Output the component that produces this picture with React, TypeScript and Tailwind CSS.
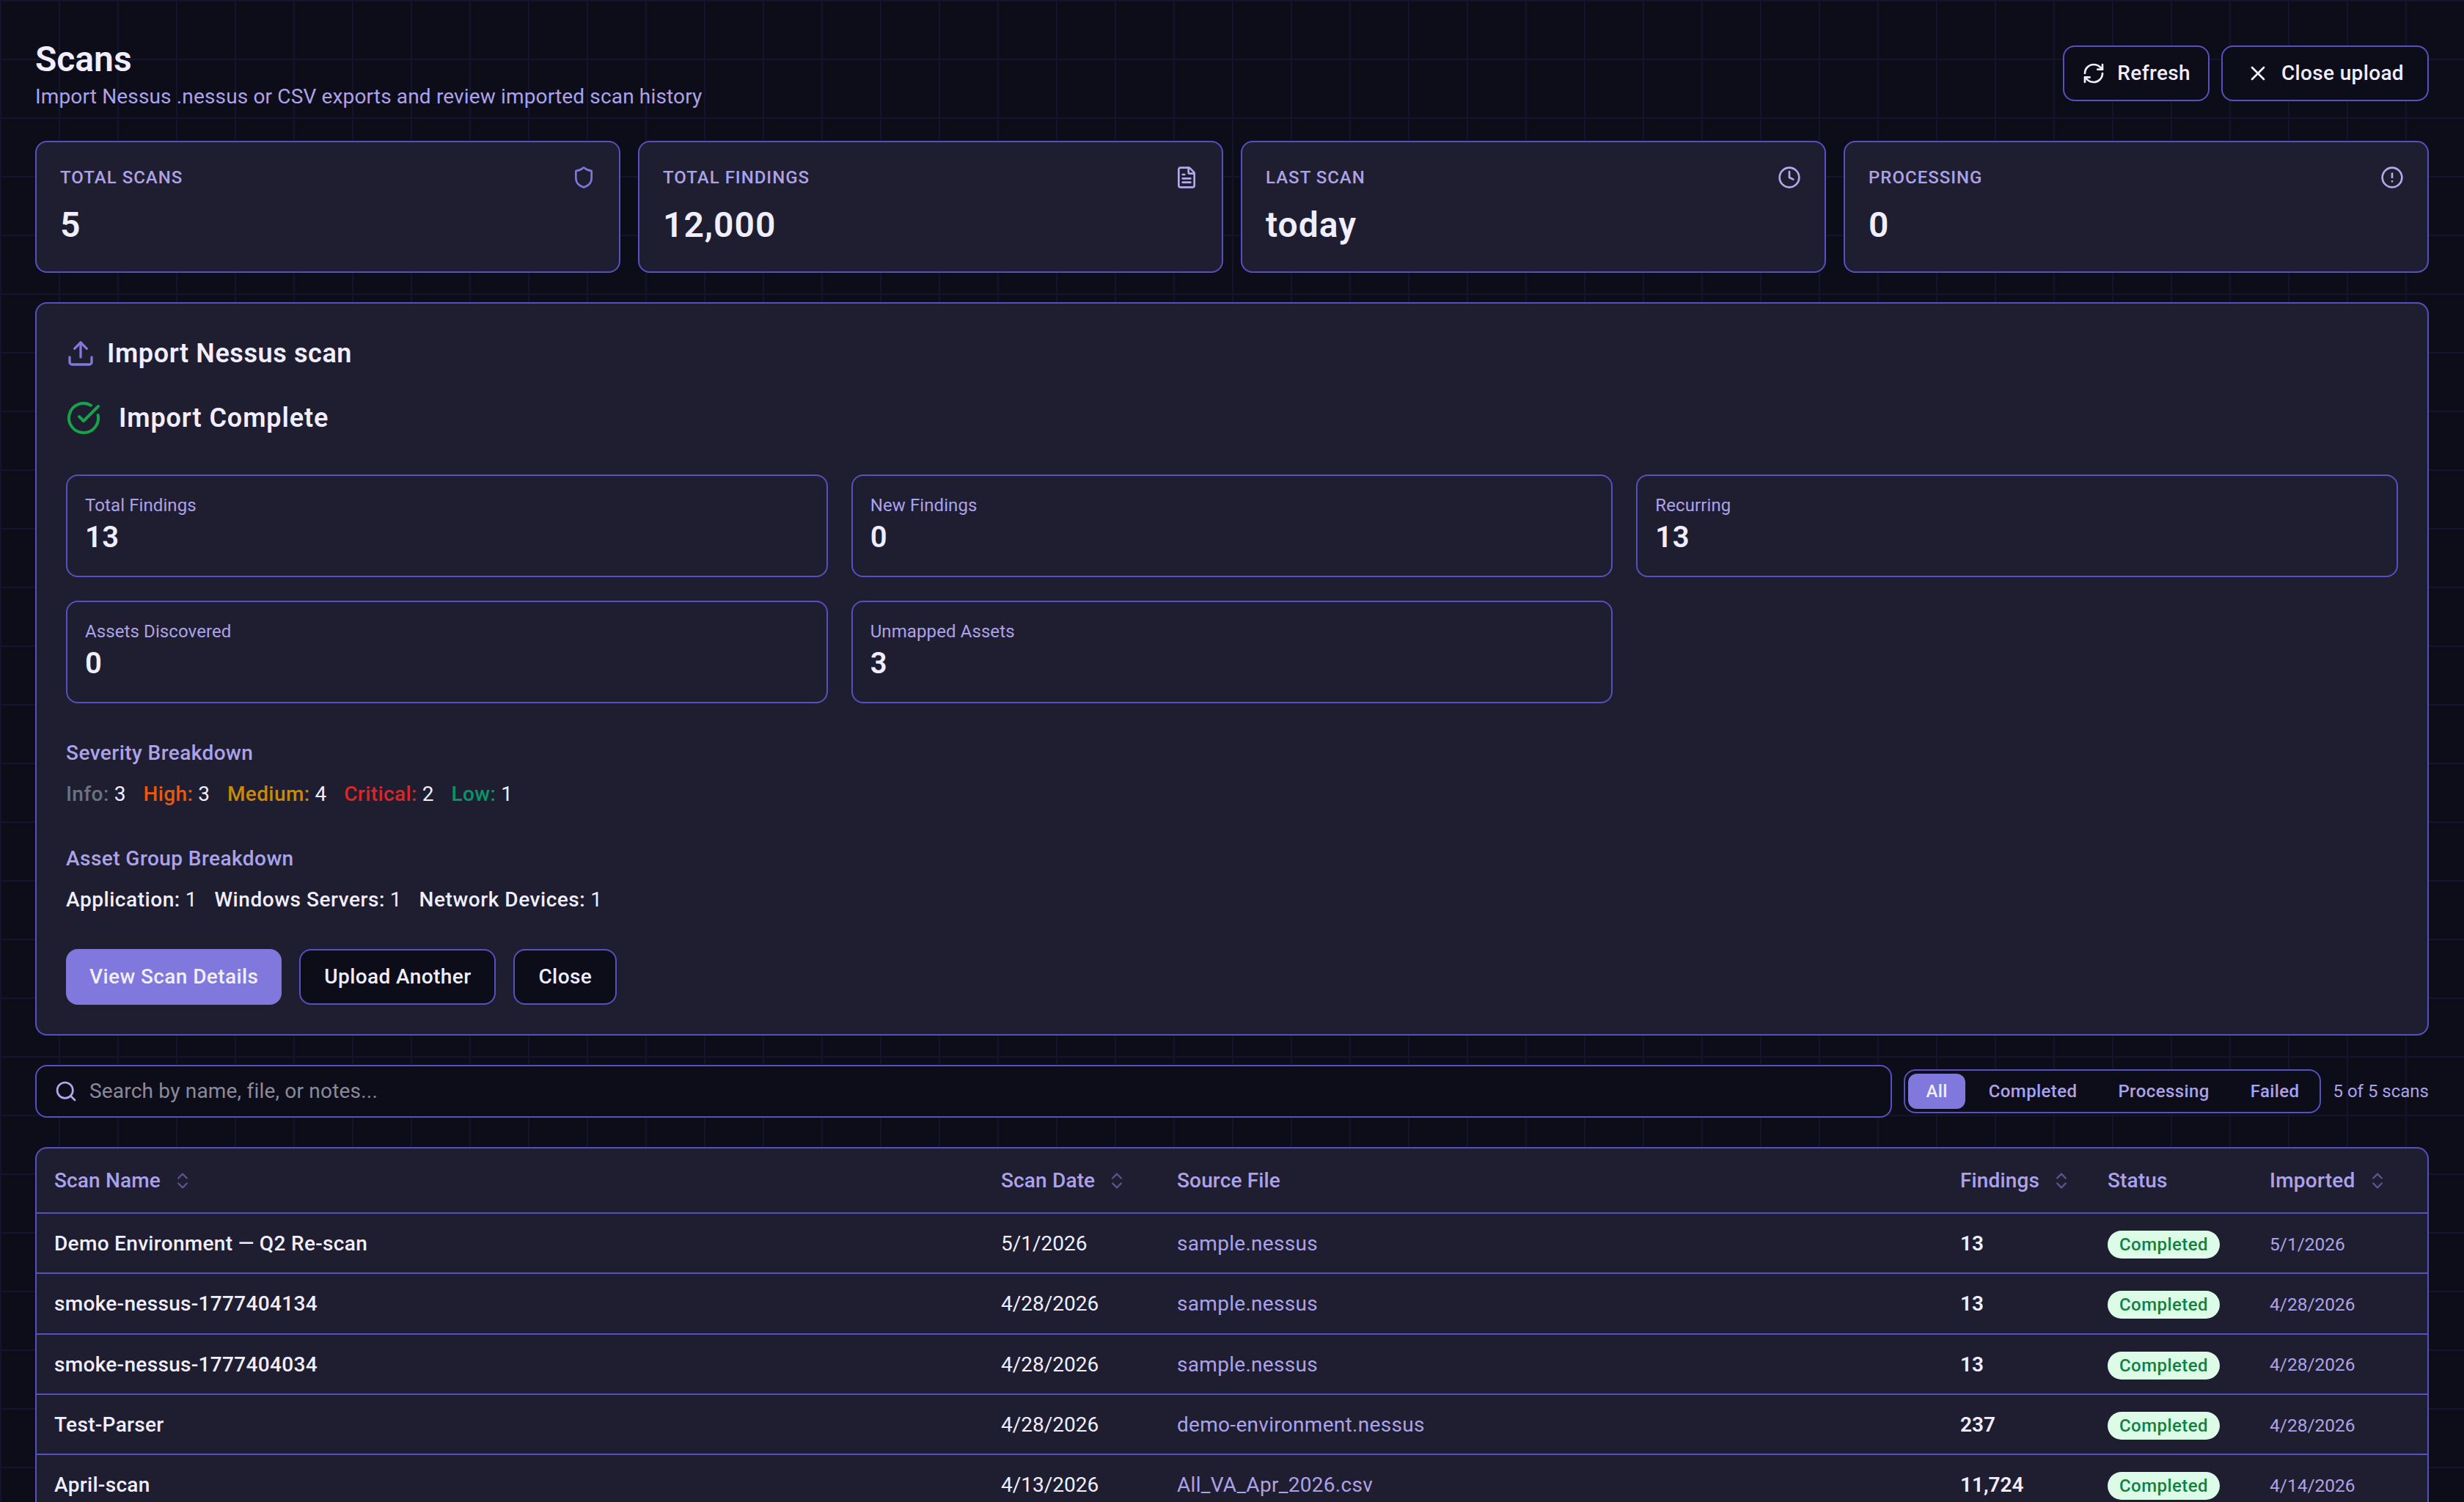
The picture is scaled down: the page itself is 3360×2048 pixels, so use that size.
import React from 'react';
import {
  AlertCircle,
  CheckCircle,
  ChevronsUpDown,
  Clock,
  FileText,
  RefreshCw,
  Search,
  Shield,
  Upload,
  X,
} from 'lucide-react';

const stats = [
  { label: 'Total Scans', value: '5', icon: Shield, tone: 'text-[#8078dc]' },
  { label: 'Total Findings', value: '12,000', icon: FileText, tone: 'text-[#b4a8ee]' },
  { label: 'Last Scan', value: 'today', icon: Clock, tone: 'text-[#b4a8ee]' },
  { label: 'Processing', value: '0', icon: AlertCircle, tone: 'text-[#b4a8ee]' },
];

const results = [
  { label: 'Total Findings', value: '13' },
  { label: 'New Findings', value: '0' },
  { label: 'Recurring', value: '13' },
  { label: 'Assets Discovered', value: '0' },
  { label: 'Unmapped Assets', value: '3' },
];

const severities = [
  { label: 'Info:', value: '3', tone: 'text-[#6b7280]' },
  { label: 'High:', value: '3', tone: 'text-[#ea580c]' },
  { label: 'Medium:', value: '4', tone: 'text-[#ca8a04]' },
  { label: 'Critical:', value: '2', tone: 'text-[#dc2626]' },
  { label: 'Low:', value: '1', tone: 'text-[#059669]' },
];

const groups = [
  { label: 'Application:', value: '1' },
  { label: 'Windows Servers:', value: '1' },
  { label: 'Network Devices:', value: '1' },
];

const scans = [
  { name: 'Demo Environment — Q2 Re-scan', date: '5/1/2026', file: 'sample.nessus', findings: '13', imported: '5/1/2026' },
  { name: 'smoke-nessus-1777404134', date: '4/28/2026', file: 'sample.nessus', findings: '13', imported: '4/28/2026' },
  { name: 'smoke-nessus-1777404034', date: '4/28/2026', file: 'sample.nessus', findings: '13', imported: '4/28/2026' },
  { name: 'Test-Parser', date: '4/28/2026', file: 'demo-environment.nessus', findings: '237', imported: '4/28/2026' },
  { name: 'April-scan', date: '4/13/2026', file: 'All_VA_Apr_2026.csv', findings: '11,724', imported: '4/14/2026' },
];

const SortHead: React.FC<{ label: string }> = ({ label }) => (
  <span className="inline-flex items-center gap-4">
    {label}
    <ChevronsUpDown size={28} className="text-[#5a5490]" />
  </span>
);

const App: React.FC = () => {
  return (
    <div className="h-[2048px] overflow-hidden bg-[#0d0d1a] bg-[linear-gradient(#15142a_2px,transparent_2px),linear-gradient(90deg,#15142a_2px,transparent_2px)] bg-[size:80px_80px] px-12 pt-12 text-[#f0eeff] [font-family:Roboto,sans-serif]">
      {/* Header */}
      <div className="mb-10 flex items-center justify-between">
        <div>
          <h1 className="pt-[2px] text-[48px] leading-[62px] font-semibold">Scans</h1>
          <p className="text-[28px] leading-[40px] tracking-[0.15px] text-[#aca2ea]">Import Nessus .nessus or CSV exports and review imported scan history</p>
        </div>
        <div className="flex gap-4">
          <button className="flex h-[76px] items-center gap-4 rounded-2xl border-2 border-[#5850c0] bg-[#0d0d1a] px-6 text-[28px] font-[480] tracking-[0.35px]">
            <RefreshCw size={32} />
            Refresh
          </button>
          <button className="flex h-[76px] items-center gap-4 rounded-2xl border-2 border-[#5850c0] bg-[#0d0d1a] px-8 text-[28px] font-[480] tracking-[0.35px]">
            <X size={32} />
            Close upload
          </button>
        </div>
      </div>

      {/* Stat cards */}
      <div className="mb-10 grid grid-cols-4 gap-6">
        {stats.map((s) => (
          <div key={s.label} className="h-[180px] rounded-2xl border-2 border-[#5850c0] bg-[#1e1e30] p-8">
            <div className="flex items-center justify-between">
              <span className="text-[24px] leading-8 font-[480] tracking-[1px] text-[#aca2ea] uppercase">{s.label}</span>
              <s.icon size={32} className={s.tone} />
            </div>
            <div className="mt-[17px] text-[48px] leading-[64px] font-semibold tracking-[1px]">{s.value}</div>
          </div>
        ))}
      </div>

      {/* Import result */}
      <div className="mb-10 h-[1000px] rounded-2xl border-2 border-[#5850c0] bg-[#1e1e30] p-10">
        <div className="flex h-[56px] items-center gap-4">
          <Upload size={40} className="text-[#8078dc]" />
          <h2 className="text-[36px] font-semibold tracking-[0.6px]">Import Nessus scan</h2>
        </div>
        <div className="mt-8 flex h-[56px] items-center gap-6">
          <CheckCircle size={48} className="text-[#16a34a]" />
          <h3 className="text-[36px] font-semibold tracking-[0.9px]">Import Complete</h3>
        </div>

        <div className="mt-[49px] grid grid-cols-3 gap-8">
          {results.map((r) => (
            <div key={r.label} className="rounded-2xl border-2 border-[#5850c0] p-6">
              <div className="text-[24px] leading-8 tracking-[0.1px] text-[#aca2ea]">{r.label}</div>
              <div className="text-[40px] leading-[56px] font-semibold tracking-[0.5px]">{r.value}</div>
            </div>
          ))}
        </div>

        <div className="mt-12 text-[28px] leading-10 font-[480] tracking-[0.45px] text-[#aca2ea]">Severity Breakdown</div>
        <div className="mt-4 flex gap-6 text-[28px] leading-10">
          {severities.map((s) => (
            <span key={s.label}>
              <span className={`font-medium tracking-[0.4px] ${s.tone}`}>{s.label}</span> {s.value}
            </span>
          ))}
        </div>

        <div className="mt-12 text-[28px] leading-10 font-[480] tracking-[0.45px] text-[#aca2ea]">Asset Group Breakdown</div>
        <div className="mt-4 flex gap-6 text-[28px] leading-10">
          {groups.map((g) => (
            <span key={g.label}>
              <span className="font-medium tracking-[0.55px]">{g.label}</span> {g.value}
            </span>
          ))}
        </div>

        <div className="mt-[47px] flex gap-6">
          <button className="h-[76px] rounded-2xl bg-[#8078dc] px-8 text-[28px] font-[480] tracking-[0.4px]">View Scan Details</button>
          <button className="h-[76px] rounded-2xl border-2 border-[#5850c0] bg-[#0d0d1a] px-8 text-[28px] font-[480] tracking-[0.4px]">Upload Another</button>
          <button className="h-[76px] rounded-2xl border-2 border-[#5850c0] bg-[#0d0d1a] px-8 text-[28px] font-[480] tracking-[0.4px]">Close</button>
        </div>
      </div>

      {/* Search and filters */}
      <div className="mb-10 flex h-[72px] items-center gap-4">
        <div className="flex h-[72px] flex-1 items-center gap-4 rounded-2xl border-2 border-[#5850c0] bg-[#0d0d1a] px-6">
          <Search size={32} className="text-[#b4a8ee]" />
          <span className="text-[28px] tracking-[0.2px] text-[#8a8a9c]">Search by name, file, or notes...</span>
        </div>
        <div className="flex h-[60px] items-center gap-2 rounded-2xl border-2 border-[#5850c0] bg-[#0d0d1a] p-1 text-[24px] font-[480] tracking-[0.4px] text-[#aca2ea]">
          <button className="h-12 rounded-xl bg-[#8078dc] px-6 text-[#f0eeff]">All</button>
          <button className="h-12 px-6">Completed</button>
          <button className="h-12 px-6">Processing</button>
          <button className="h-12 px-6">Failed</button>
        </div>
        <span className="text-[24px] text-[#aca2ea]">5 of 5 scans</span>
      </div>

      {/* Table */}
      <div className="rounded-t-2xl border-2 border-[#5850c0] bg-[#1e1e30]">
        <table className="w-full table-fixed border-separate border-spacing-0 text-left text-[28px]">
          <colgroup>
            <col className="w-[1291px]" />
            <col className="w-[240px]" />
            <col className="w-[1068px]" />
            <col className="w-[201px]" />
            <col className="w-[221px]" />
            <col className="w-[239px]" />
          </colgroup>
          <thead>
            <tr className="h-[89px] text-[#aca2ea]">
              <th className="border-b-2 border-[#5850c0] px-6 font-[480] tracking-[0.15px]"><SortHead label="Scan Name" /></th>
              <th className="border-b-2 border-[#5850c0] px-6 font-[480] tracking-[0.15px]"><SortHead label="Scan Date" /></th>
              <th className="border-b-2 border-[#5850c0] px-6 font-[480] tracking-[0.15px]">Source File</th>
              <th className="border-b-2 border-[#5850c0] px-6 font-[480] tracking-[0.15px]"><SortHead label="Findings" /></th>
              <th className="border-b-2 border-[#5850c0] px-6 font-[480] tracking-[0.15px]">Status</th>
              <th className="border-b-2 border-[#5850c0] px-6 font-[480] tracking-[0.25px]"><SortHead label="Imported" /></th>
            </tr>
          </thead>
          <tbody>
            {scans.map((s) => (
              <tr key={s.name} className="h-[82.25px]">
                <td className="border-b-2 border-[#5850c0] px-6 pt-[2px] font-[480] tracking-[0.32px]">{s.name}</td>
                <td className="border-b-2 border-[#5850c0] px-6 pt-[2px]">{s.date}</td>
                <td className="border-b-2 border-[#5850c0] px-6 pt-[2px] tracking-[0.3px] text-[#aca2ea]">{s.file}</td>
                <td className="border-b-2 border-[#5850c0] px-6 pt-[2px] font-semibold">{s.findings}</td>
                <td className="border-b-2 border-[#5850c0] px-6 pt-[2px]">
                  <span className="inline-flex h-[38px] items-center rounded-full bg-[#dcfce7] px-4 text-[24px] font-[480] tracking-[0.45px] text-[#15803d]">Completed</span>
                </td>
                <td className="border-b-2 border-[#5850c0] px-6 pt-[4px] text-[24.5px] text-[#aca2ea]">{s.imported}</td>
              </tr>
            ))}
          </tbody>
        </table>
      </div>
    </div>
  );
};

export default App;
